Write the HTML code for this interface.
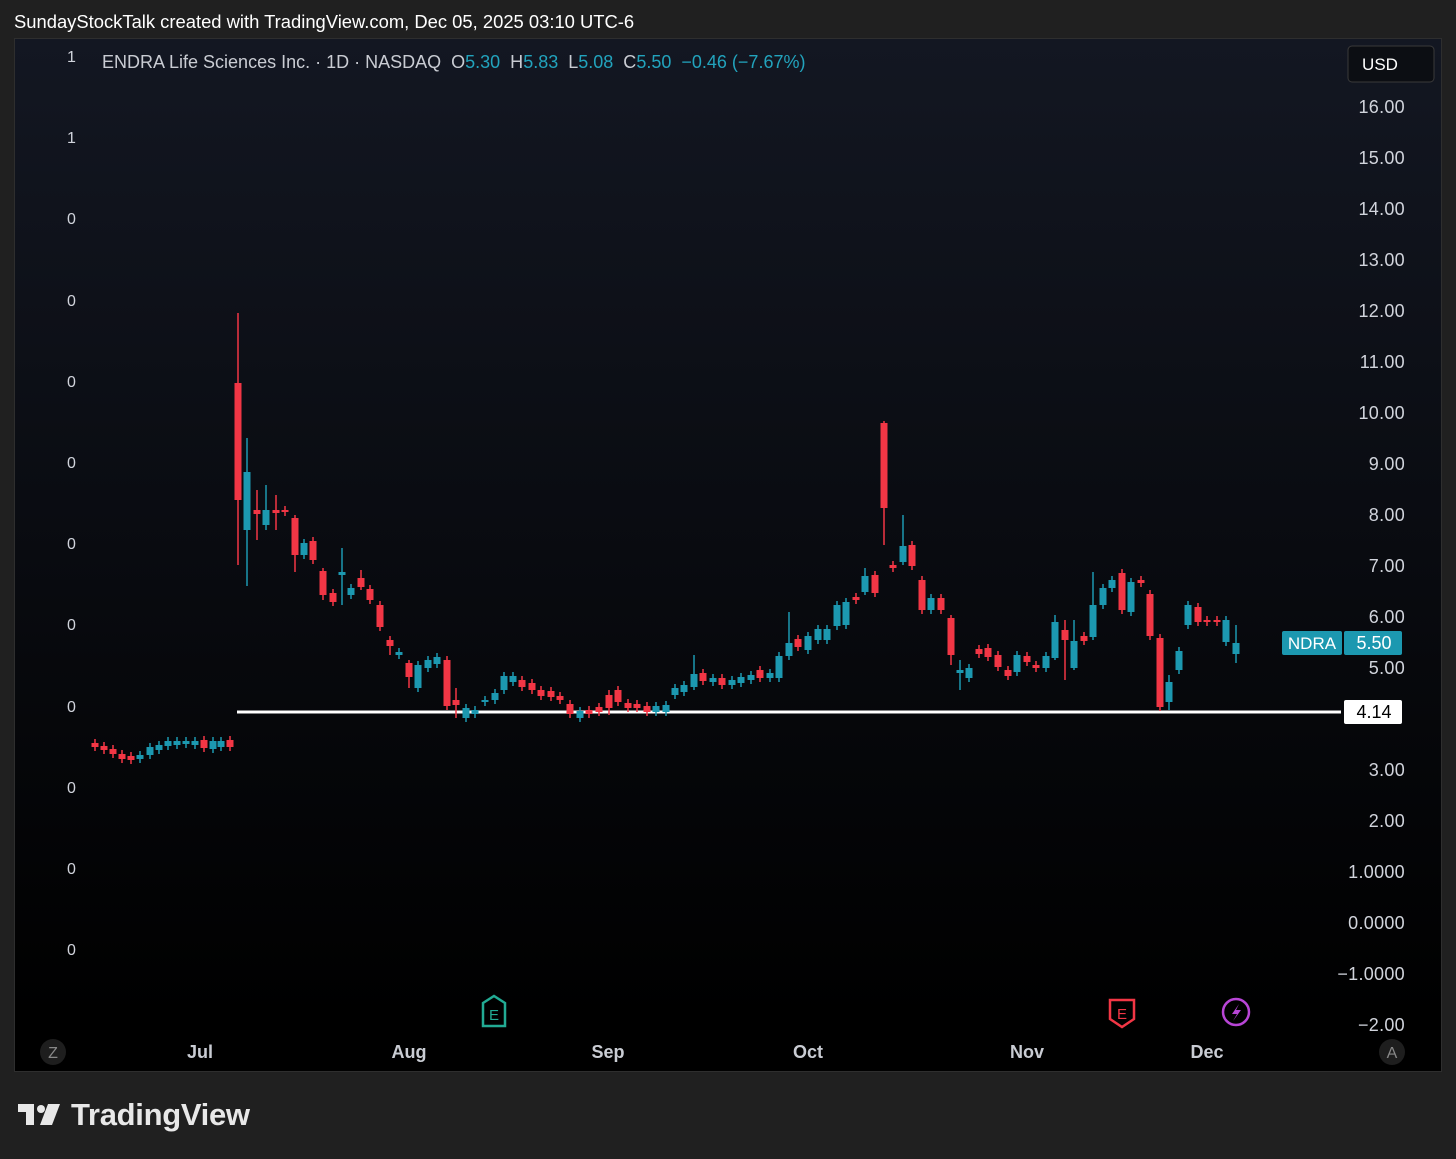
<!DOCTYPE html>
<html><head><meta charset="utf-8"><style>
body{margin:0;width:1456px;height:1159px;background:#202020;font-family:"Liberation Sans",sans-serif;overflow:hidden;position:relative}
.t{position:absolute;white-space:nowrap}
#chart{position:absolute;left:15px;top:39px;width:1426px;height:1032px;background:linear-gradient(#131722,#000 95%);outline:1px solid #2e2e2e}
.ax{position:absolute;color:#d1d4dc;font-size:18px;letter-spacing:0.3px}
.la{position:absolute;color:#d1d4dc;font-size:16px;left:67px}
.tm{position:absolute;top:1042px;color:#c9ccd3;font-size:18px;font-weight:bold;transform:translateX(-50%)}
</style></head><body>
<div class="t" style="left:14px;top:11px;color:#fff;font-size:18.4px">SundayStockTalk created with TradingView.com, Dec 05, 2025 03:10 UTC-6</div>
<div id="chart"></div>
<svg id="sv" width="1456" height="1159" style="position:absolute;left:0;top:0">
<line x1="237" y1="712" x2="1341" y2="712" stroke="#fff" stroke-width="3"/>
<g id="cd"></g>
<path d="M483 1003 L494 996 L505 1003 L505 1026 L483 1026 Z" fill="none" stroke="#22ab94" stroke-width="2.5"/>
<text x="494" y="1020" fill="#22ab94" font-size="15" text-anchor="middle" font-family="Liberation Sans">E</text>
<path d="M1110 1000 L1134 1000 L1134 1019 L1122 1027 L1110 1019 Z" fill="none" stroke="#f23645" stroke-width="2.5"/>
<text x="1122" y="1019" fill="#f23645" font-size="15" text-anchor="middle" font-family="Liberation Sans">E</text>
<circle cx="1236" cy="1012" r="13" fill="none" stroke="#b845d6" stroke-width="2.5"/>
<path d="M1239 1004 L1232 1014 L1237 1014 L1233 1021 L1241 1010 L1236 1010 Z" fill="#b845d6"/>
<circle cx="53" cy="1052" r="13" fill="#1e1e1e"/>
<circle cx="1392" cy="1052" r="13" fill="#1e1e1e"/>
<text x="53" y="1058" fill="#888" font-size="16" text-anchor="middle" font-family="Liberation Sans">Z</text>
<text x="1392" y="1058" fill="#888" font-size="16" text-anchor="middle" font-family="Liberation Sans">A</text>
<rect x="1282" y="631" width="60" height="24" rx="2" fill="#1c98b0"/>
<rect x="1344" y="631" width="58" height="24" rx="2" fill="#1c98b0"/>
<text x="1312" y="649" fill="#fff" font-size="17" text-anchor="middle" font-family="Liberation Sans">NDRA</text>
<text x="1374" y="649" fill="#fff" font-size="18" text-anchor="middle" font-family="Liberation Sans">5.50</text>
<rect x="1344" y="700" width="58" height="24" rx="2" fill="#fff"/>
<text x="1374" y="718" fill="#000" font-size="18" text-anchor="middle" font-family="Liberation Sans">4.14</text>
<rect x="1348" y="46" width="86" height="36" rx="4" fill="#0c0e13" stroke="#3a3a3a"/>
<text x="1380" y="70" fill="#fff" font-size="17" text-anchor="middle" font-family="Liberation Sans">USD</text>
<path d="M18 1104 H34 V1125 H26 V1112 H18 Z" fill="#e8e8e8"/>
<circle cx="41" cy="1109" r="4" fill="#e8e8e8"/>
<path d="M48 1104 H60 L52 1125 H40 Z" fill="#e8e8e8"/>
</svg>
<div class="t" style="left:102px;top:52px;font-size:18px;color:#c9ccd3">ENDRA Life Sciences Inc. · 1D · NASDAQ &nbsp;O<span style="color:#22a3bd">5.30</span> &nbsp;H<span style="color:#22a3bd">5.83</span> &nbsp;L<span style="color:#22a3bd">5.08</span> &nbsp;C<span style="color:#22a3bd">5.50</span> &nbsp;<span style="color:#22a3bd">−0.46 (−7.67%)</span></div>
<div class="t" style="left:71px;top:1097px;font-size:31px;font-weight:bold;color:#e8e8e8;letter-spacing:-0.3px">TradingView</div>
<div id="lab"></div>
<script>
var cd=[[95,'r',743,747],[104,'r',746,750],[113,'r',749,754],[122,'r',754,759],[131,'r',756,760],[140,'c',755,759],[150,'c',747,755],[159,'c',745,750],[168,'c',741,746],[177,'c',741,745],[186,'c',741,744],[195,'c',741,745],[204,'r',740,748],[213,'c',741,749],[221,'c',741,747],[230,'r',740,747],
[238,'r',383,500,313,565],[247,'c',472,530,438,586],[257,'r',510,514,490,540],[266,'c',510,525,485,530],[276,'r',510,513,495,530],[285,'r',510,512],[295,'r',518,555,515,572],[304,'c',543,555],[313,'r',541,560],[323,'r',571,595,568,600],[333,'r',593,602],[342,'c',572,575,548,605],[351,'c',588,595],[361,'r',578,587,570,590],[370,'r',589,600],[380,'r',605,627],[390,'r',640,646,636,655],[399,'c',652,655],[409,'r',663,677,660,688],[418,'c',665,688],[428,'c',660,668],[437,'c',657,664],[447,'r',660,706],[456,'r',700,705,688,718],[466,'c',708,718],[475,'c',710,714],[485,'c',700,702],[495,'c',693,700],[504,'c',676,690],[513,'c',676,682],[522,'r',680,687],[532,'r',683,690],[541,'r',690,696],[551,'r',691,697],[560,'r',696,700],[570,'r',704,714],[580,'c',711,718],[589,'r',710,714],[599,'r',707,712],[609,'r',695,708,690,715],[618,'r',690,702],[628,'r',703,708],[637,'r',704,708],[647,'r',706,712],[656,'c',706,712],[666,'c',705,712],[675,'c',688,695],[684,'c',685,692],[694,'c',674,687,655,690],[703,'r',673,681],[713,'c',678,682],[722,'r',678,685],[732,'c',680,685],[741,'c',677,683],[751,'c',675,680],[760,'r',670,678],[770,'c',673,678],[779,'c',656,678],[789,'c',643,656,612,660],[798,'r',639,647],[808,'c',636,650],[818,'c',629,640],[827,'c',629,640],[837,'c',605,626],[846,'c',602,625],[856,'r',597,600],[865,'c',576,592,568,595],[875,'r',575,593],[884,'r',423,508,421,545],[893,'r',565,568],[903,'c',546,562,515,565],[912,'r',545,566],[922,'r',580,610],[931,'c',598,610],[941,'r',598,610],[951,'r',618,655,615,665],[960,'c',670,673,660,690],[969,'c',668,678],[979,'r',649,654],[988,'r',648,657],[998,'r',655,667],[1008,'r',670,676],[1017,'c',655,672],[1027,'r',656,662],[1036,'r',665,668],[1046,'c',656,668],[1055,'c',622,658,615,660],[1065,'r',630,640,620,680],[1074,'c',641,668,620,670],[1084,'r',636,641],[1093,'c',605,637,572,640],[1103,'c',588,605],[1112,'c',580,588],[1122,'r',573,610],[1131,'c',582,612],[1141,'r',580,583],[1150,'r',594,636],[1160,'r',638,707],[1169,'c',682,702,675,710],[1179,'c',651,670],[1188,'c',605,625],[1198,'r',607,622],[1207,'r',620,622],[1217,'r',620,622],[1226,'c',620,642],[1236,'c',643,654,625,663]];
var s='';cd.forEach(function(c){var col=c[1]=='r'?'#f23645':'#1c98b0';var t=c[2],b=c[3];var h=c.length>4?c[4]:t-4,l=c.length>4?c[5]:b+4;
s+='<line x1="'+c[0]+'" x2="'+c[0]+'" y1="'+h+'" y2="'+l+'" stroke="'+col+'" stroke-width="1.5"/>';
s+='<rect x="'+(c[0]-3.5)+'" y="'+t+'" width="7" height="'+Math.max(2,b-t)+'" fill="'+col+'"/>';});
document.getElementById('cd').innerHTML=s;
var L='';var v=['16.00','15.00','14.00','13.00','12.00','11.00','10.00','9.00','8.00','7.00','6.00','5.00','','3.00','2.00','1.0000','0.0000','−1.0000','−2.00'];
v.forEach(function(x,i){if(x)L+='<div class="t ax" style="right:'+(1456-1405)+'px;top:'+(97+i*51)+'px">'+x+'</div>';});
var lv=['1','1','0','0','0','0','0','0','0','0','0','0'];lv.forEach(function(x,i){L+='<div class="t la" style="top:'+(49+i*81.2)+'px">'+x+'</div>';});
[['Jul',200],['Aug',409],['Sep',608],['Oct',808],['Nov',1027],['Dec',1207]].forEach(function(m){L+='<div class="t tm" style="left:'+m[1]+'px">'+m[0]+'</div>';});
document.getElementById('lab').innerHTML=L;
</script>
</body></html>
